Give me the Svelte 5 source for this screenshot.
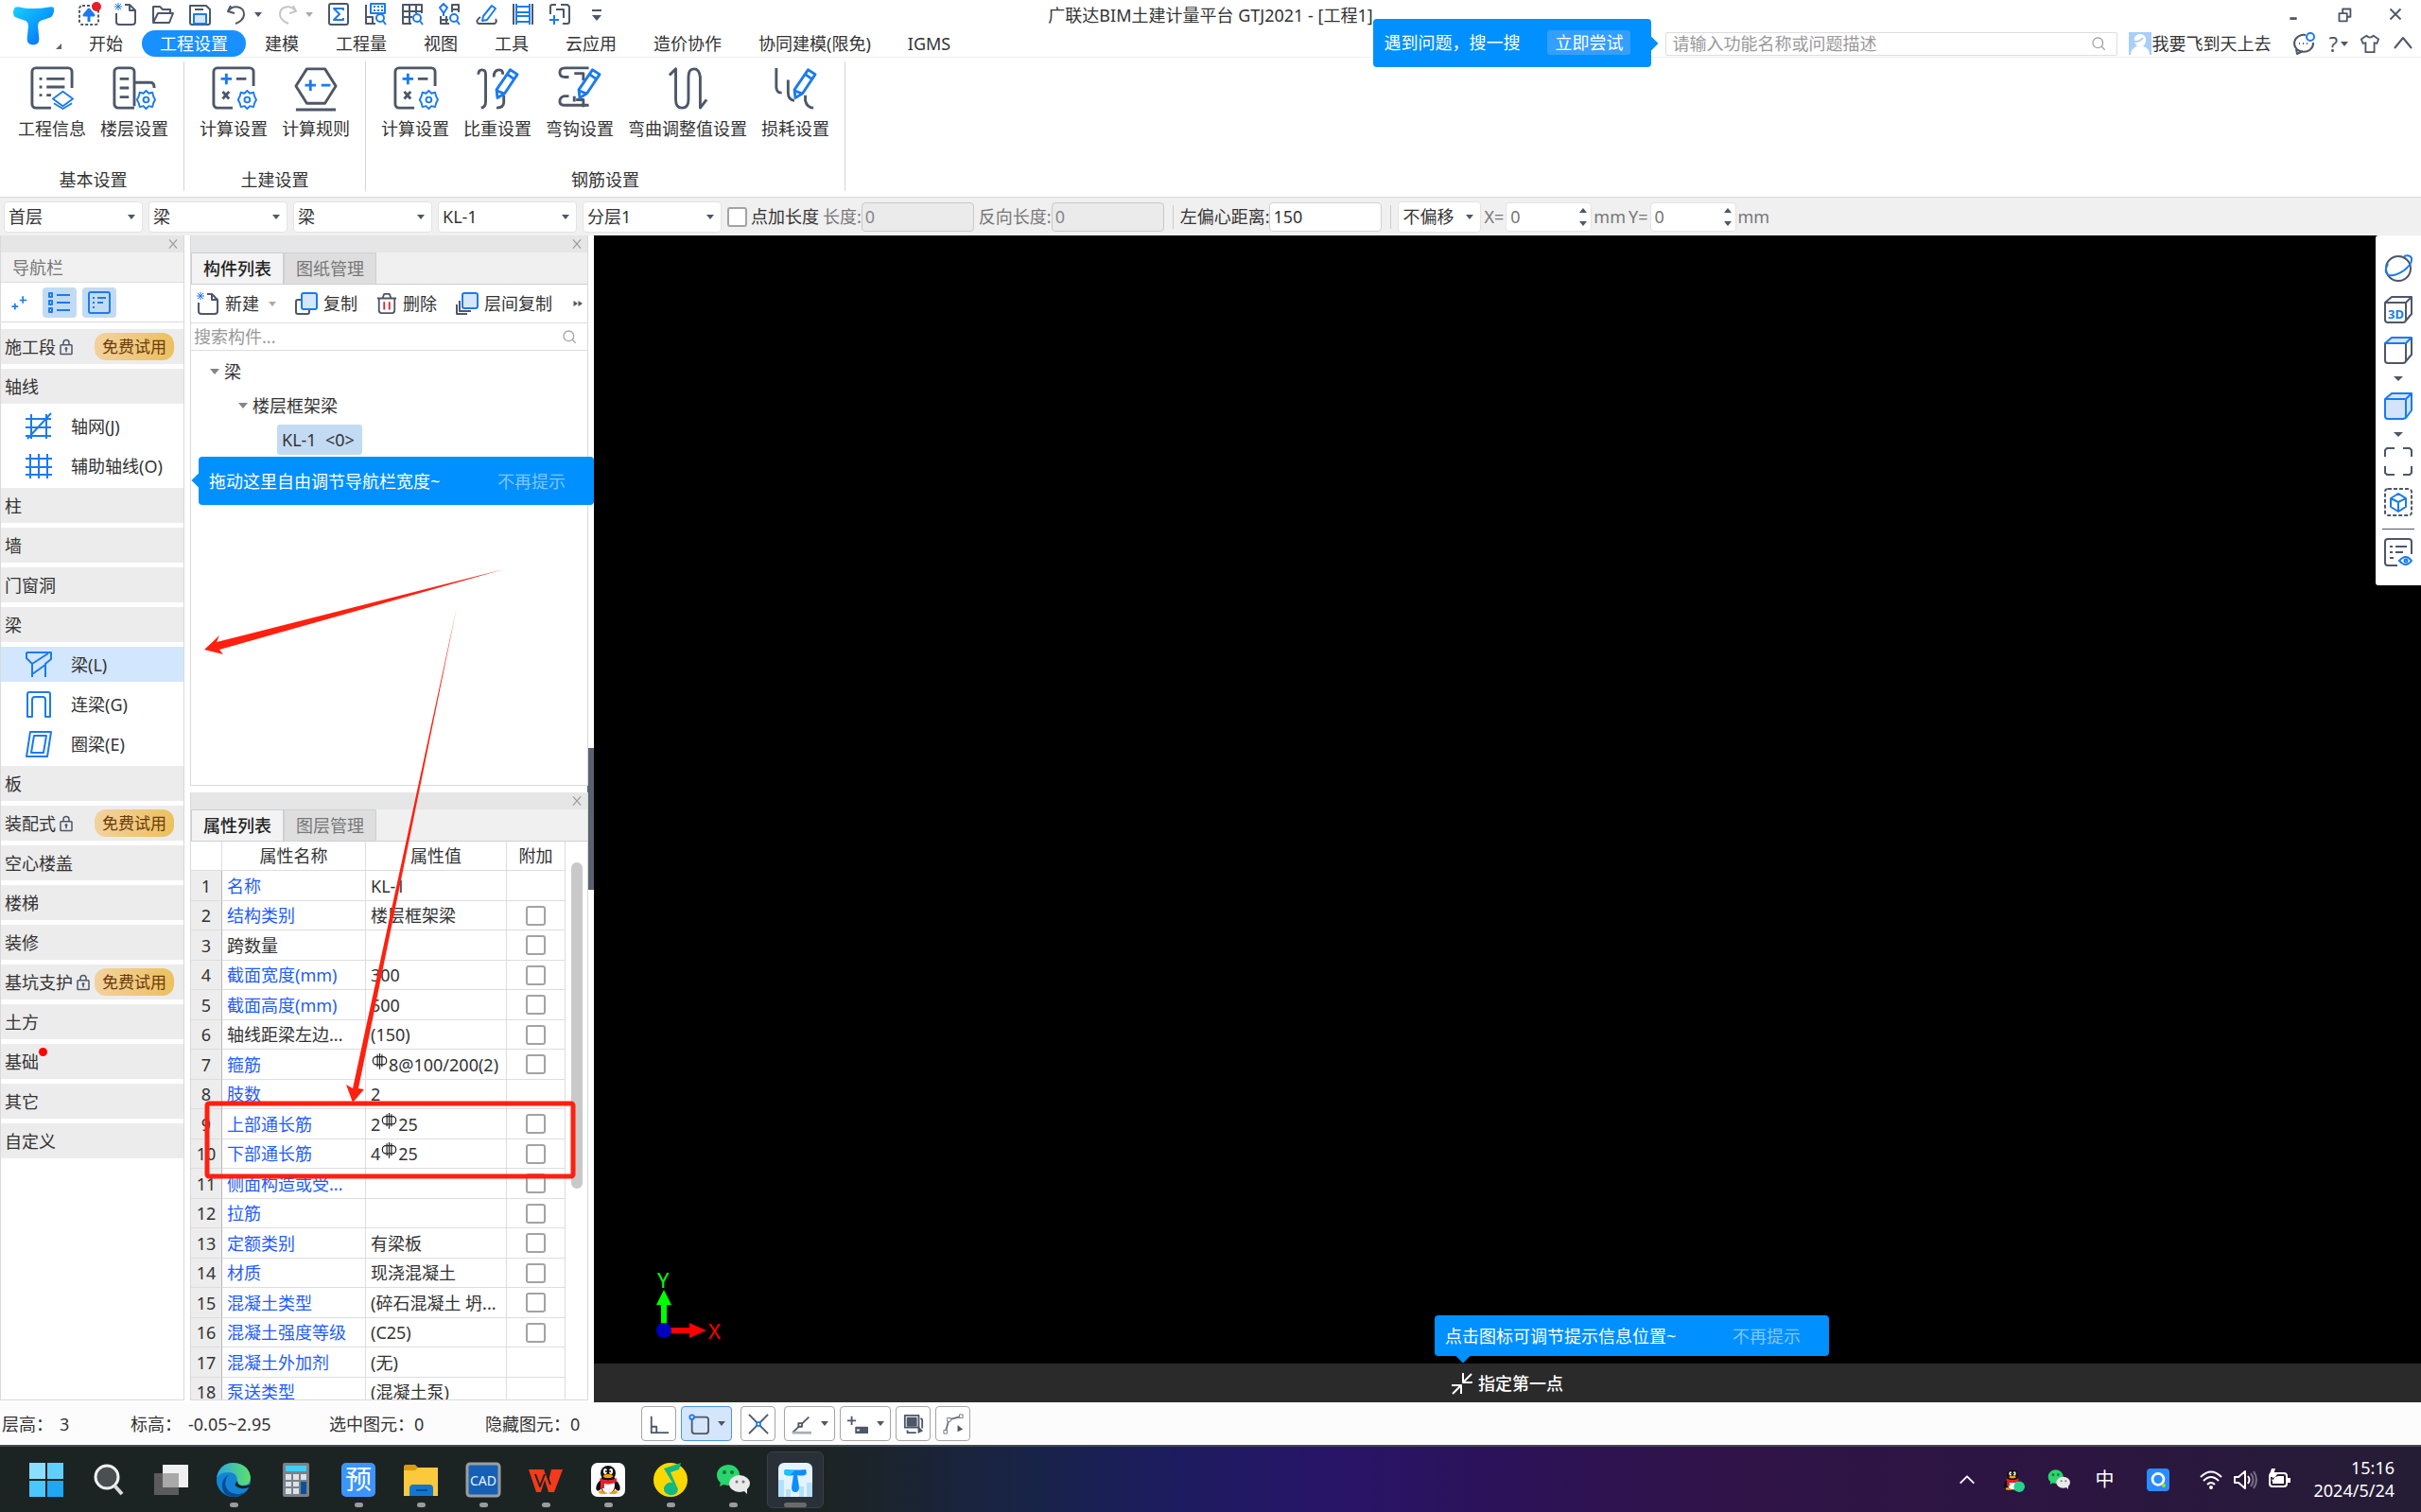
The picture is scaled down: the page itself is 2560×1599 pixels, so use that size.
<script>
  const G = '#4d5768';
  const B = '#1a7bef';
  const gear = (x, y) =>
    `<g stroke="${B}" stroke-width="2"><path d="M${x} ${y - 10}l3 3 4-1 1 4 2 4-2 4-1 4-4-1-3 3-3-3-4 1-1-4-2-4 2-4 1-4 4 1z"/><circle cx="${x}" cy="${y}" r="3"/></g>`;
  const pencil = `<g stroke="${B}"><path d="M38 4l8 5-14 21-8 5-1-9z" fill="#fff"/><path d="M35 9l7 5M23 27l8 3"/></g>`;
  const calc = `<path d="M23 46H6a4 4 0 0 1-4-4V6a4 4 0 0 1 4-4h36a4 4 0 0 1 4 4v16"/><path stroke="${B}" d="M10 14h12M16 8v12"/><path d="M27 14h11M12 28l7 8M19 28l-7 8"/>${gear(39, 37)}`;
  const mag = `<g stroke="${B}"><circle cx="17" cy="16" r="4"/><path d="M20 19l3 4"/></g>`;
  const wechat = `<ellipse cx="13" cy="13" rx="12" ry="11" fill="#2bd46c"/><path d="M5 20l-1 5 6-3z" fill="#2bd46c"/><circle cx="9" cy="10" r="2" fill="#14713a"/><circle cx="17" cy="10" r="2" fill="#14713a"/><ellipse cx="25" cy="22" rx="11" ry="9" fill="#e9e9e9"/><path d="M29 29l4 4v-6z" fill="#e9e9e9"/><circle cx="22" cy="20" r="1.500" fill="#777"/><circle cx="29" cy="20" r="1.500" fill="#777"/>`;
  const penguin = `<ellipse cx="9" cy="24" rx="3" ry="6" transform="rotate(25 9 24)" fill="#111"/><ellipse cx="27" cy="24" rx="3" ry="6" transform="rotate(-25 27 24)" fill="#111"/><ellipse cx="13" cy="31" rx="5" ry="2" fill="#f5a300"/><ellipse cx="23" cy="31" rx="5" ry="2" fill="#f5a300"/><ellipse cx="18" cy="22" rx="9" ry="10" fill="#111"/><ellipse cx="18" cy="24" rx="7" ry="8" fill="#fff"/><ellipse cx="18" cy="11" rx="8" ry="8" fill="#111"/><ellipse cx="15" cy="9" rx="2" ry="3" fill="#fff"/><ellipse cx="21" cy="9" rx="2" ry="3" fill="#fff"/><circle cx="16" cy="9" r="1" fill="#111"/><circle cx="20" cy="9" r="1" fill="#111"/><ellipse cx="18" cy="14" rx="5" ry="2" fill="#f5a300"/><path d="M9 16q9 5 18 0v4q-7 4-13 2v5h-4v-7z" fill="#e5202b"/>`;
  const tShape = `<path d="M7 7q-2 5 1 6 4 1 8 0l-2 13q0 5 4 5t4-5l-2-13q4 1 8 0 3-1 1-6-11 1-22 0z" fill="#0b8dff"/><path d="M7 7q-2 5 1 6 4 1 6-1l3-4q-5 0-10-1z" fill="#18c4fb"/>`;

  // viewBox size and drawing of every icon
  const icons = {
    logo: [36, `<defs><linearGradient id="tg" x1="0" y1="0" x2="1" y2="1"><stop offset="0" stop-color="#18d0fb"/><stop offset=".5" stop-color="#0b9dff"/><stop offset="1" stop-color="#0b62f0"/></linearGradient></defs><path stroke="none" d="M3 3Q0 8 3 11q5 2 9 3 2 1 2 5l-1 10q0 5 5 5t5-5l-1-10q0-4 2-5 4-1 9-3 3-3 2-8-2-1-5 0-5 1-12 1T8 3Q5 2 3 3z" fill="url(#tg)"/>`],
    export: [24, `<rect x="2" y="3" width="20" height="20" rx="3" stroke-dasharray="3 2"/><path d="M12 20V10M7 13l5-6 5 6z" stroke="${B}" stroke-width="3" fill="${B}"/><circle cx="20" cy="4" r="5" fill="#e5202b" stroke="none"/>`],
    new: [24, `<path d="M2 11v9a3 3 0 0 0 3 3h14a3 3 0 0 0 3-3V8l-6-6h-5"/><path d="M16 2v6h6"/><path stroke="${B}" stroke-width="1" d="M1 1l6 6M7 1L1 7M4 0v8M0 4h8"/>`],
    open: [24, `<path d="M2 20V4h7l3 3h8v4M2 21l5-10h16l-4 10z"/>`],
    save: [24, `<path d="M2 3h17l4 4v14a2 2 0 0 1-2 2H4a2 2 0 0 1-2-2z"/><path d="M7 7h9"/><rect x="6" y="12" width="13" height="10" fill="#d6e6fb" stroke="${B}"/>`],
    undo: [24, `<path d="M6 3L3 9l7 2M3 9c6-8 17-5 17 3 0 5-4 8-9 10"/>`],
    redo: [24, `<path stroke="#c4c6ca" d="M18 3l3 6-7 2M21 9C15 1 4 4 4 12c0 5 4 8 9 10"/>`],
    sigma: [24, `<rect x="2" y="1" width="20" height="22" rx="2"/><path stroke="${B}" d="M17 8V6H7l6 6-6 6h10v-2"/>`],
    mgrid: [24, `<rect x="7" y="1" width="15" height="10" stroke="${B}"/><path stroke="${B}" stroke-dasharray="2 2" d="M10 4h10M10 8h10"/><path d="M2 2v20h10M2 15h7v7"/>${mag}`],
    tgrid: [24, `<path d="M11 22H2V2h20v9M2 9h20M2 15h10M9 2v20M16 2v9"/>${mag}`],
    shapes: [24, `<path stroke="${B}" d="M6 1l4 4-4 6-4-6zM6 11v3"/><path d="M15 10V2h7v8M15 7h7M3 14v8h9M3 18h8M9 14v8"/>${mag}`],
    edit: [24, `<path stroke="${B}" d="M18 3l4 3-9 12-5 1 1-5z"/><path d="M6 15q-6 4-2 7h17q3-2 1-5"/>`],
    ladder: [24, `<path d="M2 1v22M22 1v22"/><path stroke="${B}" d="M5 1v22M19 1v22M5 4h14M5 10h14M5 14h14M5 20h14"/>`],
    addframe: [24, `<path d="M2 12V4q0-2 2-2h4M13 2h7l2 2v16q0 2-2 2h-5M8 7h8v9"/><path stroke="${B}" d="M1 18h10M6 13v10"/>`],
    more: [24, `<path d="M7 8h10"/><path d="M7 13h10l-5 6z" fill="${G}" stroke="none"/>`],
    info: [48, `<path d="M23 46H6a4 4 0 0 1-4-4V6a4 4 0 0 1 4-4h36a4 4 0 0 1 4 4v18"/><path d="M10 14h3M18 14h20M10 23h3M18 23h20M10 32h3M18 32h5"/><g stroke="${B}" stroke-width="2"><path d="M36 28l11 8-11 8-11-8z"/><path d="M26 41l10 6 10-6"/></g>`],
    floor: [48, `<path d="M24 46H6a4 4 0 0 1-4-4V6a4 4 0 0 1 4-4h14a4 4 0 0 1 4 4v38M24 18h18q4 0 4 6M8 14h10M8 24h10M8 34h10"/>${gear(37, 37)}`],
    calc: [48, calc],
    rule: [48, `<path d="M14 3h20l12 19-12 19H14L2 22zM2 48h44"/><path stroke="${B}" d="M12 21h12M18 15v12M30 21h10"/>`],
    weight: [48, `<path d="M3 9q0-5 4-5t4 5v30q0 6-5 7M20 12q0-8 6-8 4 0 4 5M31 32v8q0 6-8 6"/>${pencil}`],
    hook: [48, `<path d="M34 2H8q-6 0-6 5t6 5h4M18 8h10v8M12 33H7q-5 1-5 6 0 4 6 4h26M18 39v-6M28 45v-8h-8"/>${pencil}`],
    bend: [48, `<path d="M4 10l7-7v34q0 9 7 9t7-9V12q0-9 6-9t7 9v34l7-9"/>`],
    loss: [48, `<path d="M3 2v22q1 6 6 5M16 15v14q0 8 7 9M35 32v6q2 8 9 8"/>${pencil}`],
    search: [24, `<circle cx="11" cy="11" r="8" stroke="#a5a5a5"/><path stroke="#a5a5a5" d="M17 17l5 5"/>`],
    chat: [24, `<path d="M14 3a10 9 0 1 0 8 8M4 18l1 5 6-3"/><path d="M7 12h1M11 12h1M15 12h1"/><circle cx="19" cy="5" r="4" stroke="${B}"/>`],
    shirt: [24, `<path d="M8 3L2 7l2 5 3-1v11h10V11l3 1 2-5-6-4q-4 4-8 0z"/>`],
    up: [24, `<path d="M3 17l9-11 9 11"/>`],
    min: [24, `<path d="M8 17h8" stroke-width="3"/>`],
    restore: [24, `<rect x="6" y="11" width="9" height="9"/><path d="M10 11V6h9v9h-4"/>`],
    close: [24, `<path d="M6 6l12 12M18 6L6 18"/>`],
    closeg: [24, `<path stroke="#999" d="M5 4l14 16M19 4L5 20"/>`],
    avatar: [24, `<path stroke="none" fill="#a9cff8" d="M0 0h24v24H0z"/><path stroke="none" fill="#fff" d="M2 24q0-7 7-9-4-4-3-9 2-4 6-4t6 4q1 5-3 9 7 2 7 9z"/><path stroke="#a9cff8" d="M6 10q6 0 9-4"/>`],
    sparkle: [24, `<path stroke="${B}" d="M3 17h8M7 13v8M13 9h9M17 4v9"/>`],
    list: [24, `<g stroke="${B}"><rect x="1" y="2" width="3" height="4"/><rect x="1" y="10" width="3" height="4"/><rect x="1" y="18" width="3" height="4"/><path d="M9 4h14M9 12h14M9 20h14"/></g>`],
    note: [24, `<g stroke="${B}"><rect x="1" y="1" width="22" height="22" rx="2"/><path d="M5 7h2M10 7h9M5 12h2M10 12h6M5 17h2"/></g>`],
    lock: [24, `<rect x="4" y="9" width="16" height="13" rx="1"/><path d="M8 9V6q0-4 4-4t4 4v3M12 14v5"/><circle cx="12" cy="14" r="1"/>`],
    axis: [28, `<path stroke="${B}" d="M6 1v26M22 1v26M0 6h27M0 15h27M0 24h27M2 27L27 0"/>`],
    grid: [28, `<path stroke="${B}" d="M5 1v26M14 1v26M23 1v26M0 6h28M0 15h28M0 23h28"/>`],
    beam: [28, `<path stroke="${B}" d="M1 1h26v7l-6 5v14M1 1v6l6 6v14M7 13L24 2M7 24l14-10"/>`],
    link: [28, `<path stroke="${B}" d="M2 27V3q0-2 2-2h20q2 0 2 2v24h-5V9q0-3-3-3h-8q-3 0-3 3v18z"/>`],
    ring: [28, `<path stroke="${B}" d="M5 1h22l-4 26H1zM9 5h13l-3 18H6z"/>`],
    copy: [24, `<path d="M6 8H3a2 2 0 0 0-2 2v11a2 2 0 0 0 2 2h10a2 2 0 0 0 2-2v-2"/><rect x="7" y="1" width="16" height="17" rx="2" fill="#d6e6fb" stroke="${B}"/>`],
    trash: [24, `<path d="M1 6h22M7 6l2-5h6l2 5M3 6v14q0 3 3 3h12q3 0 3-3V6"/><path stroke="#e5202b" d="M9 10v9M15 10v9"/>`],
    layers: [24, `<path d="M4 9v11h12M1 13v10h11"/><rect x="7" y="1" width="16" height="16" rx="2" fill="#d6e6fb" stroke="${B}"/>`],
    dbl: [24, `<path d="M3 6l9 6-9 6zM13 6l9 6-9 6z" fill="${G}" stroke="none"/>`],
    orbit: [30, `<circle cx="15" cy="15" r="13"/><path stroke="${B}" d="M4 10q-5 9 1 12 7 1 16-5 9-7 8-13-2-4-8-2"/>`],
    cube3d: [30, `<path d="M1 8h22v18q0 3-3 3H4q-3 0-3-3zM1 8l7-6h21v18l-6 7M23 8l6-6"/><text x="4" y="25" font-size="13" font-weight="700" fill="${B}" stroke="none">3D</text>`],
    cubetop: [30, `<path d="M1 8h22v18q0 3-3 3H4q-3 0-3-3zM29 2v18l-6 7"/><path stroke="${B}" fill="#d2e3fa" d="M1 8l7-6h21l-6 6z"/>`],
    cubefill: [30, `<path stroke="${B}" fill="#d2e3fa" d="M1 8l7-6h21v18l-6 8-3 1H4q-3 0-3-3zM1 8h22v20M23 8l6-6"/>`],
    corners: [30, `<path d="M1 10V3l2-2h8M20 1h7l2 2v7M29 20v7l-2 2h-7M11 29H3l-2-2v-7"/>`],
    isolate: [30, `<rect x="1" y="1" width="28" height="28" rx="3" stroke-dasharray="4 2"/><path stroke="${B}" d="M15 6l8 5v9l-8 5-8-5v-9zM7 11l8 4 8-4M15 15v10"/>`],
    viewlist: [30, `<path d="M14 29H4q-3 0-3-3V4q0-3 3-3h22q3 0 3 3v13M6 9h3M12 9h12M6 15h3M12 15h8M6 21h4"/><path stroke="${B}" d="M16 24q7-8 13 0-6 8-13 0z"/><circle cx="23" cy="24" r="1.500" stroke="${B}"/>`],
    ortho: [24, `<path d="M3 3v19h20M3 15h6v7"/>`],
    snap: [24, `<rect x="4" y="4" width="19" height="19" rx="3"/><circle cx="4" cy="4" r="2.500" stroke="${B}" fill="#d5e5fb"/>`],
    cross: [24, `<path d="M1 1l22 22M23 1L1 23"/><rect x="10" y="10" width="4" height="4" stroke="${B}" fill="#fff"/>`],
    angle: [24, `<path d="M1 22L20 4"/><path stroke="#a9adb5" stroke-width="3" d="M1 22h22"/><rect x="8" y="11" width="4" height="4" fill="#fff"/>`],
    plusbar: [24, `<path d="M0 8h10M5 3v10"/><rect x="10" y="16" width="13" height="6" fill="${G}"/><path stroke="#fff" d="M11 19h3"/>`],
    pick: [24, `<rect x="2" y="2" width="16" height="14"/><path d="M5 5h10v9H5z" fill="${G}"/><path d="M5 19v3h10M22 6v11M20 6h2"/><path d="M17 14v9l6-3z" fill="${G}" stroke="none"/>`],
    poly: [24, `<path d="M3 21L7 7l15-4" stroke="#6c7482"/><g fill="#fff" stroke="#6c7482" stroke-width="1"><rect x="1" y="19" width="4" height="4"/><rect x="5" y="5" width="4" height="4"/><rect x="19" y="1" width="4" height="4"/></g><path d="M17 13v8l6-3z" fill="${G}" stroke="none"/>`],
    inward: [24, `<path stroke="#fff" d="M22 2L13 11M13 1v10h10M2 23l9-9M1 14h10v9"/>`],
    rebar: [16, `<rect x="2" y="3" width="12" height="7" rx="3" stroke-width="1" stroke="#222"/><path stroke="#222" stroke-width="1" d="M8 0v14M6 1v11M10 1v11"/>`],
    windows: [36, `<g stroke="none"><path d="M0 0h17v17H0z" fill="#8adfff"/><path d="M19 0h17v17H19z" fill="#5fd0fd"/><path d="M0 19h17v17H0z" fill="#4cc6fb"/><path d="M19 19h17v17H19z" fill="#1ea7f2"/></g>`],
    find: [36, `<circle cx="16" cy="15" r="12" stroke="#f2f2f2" stroke-width="3" fill="#4a5052"/><path stroke="#dcdcdc" stroke-width="4" d="M24 24l8 9"/>`],
    task: [36, `<g stroke="none"><path d="M0 11h26v23H0z" fill="#5b5b5b"/><path d="M9 2h27v24H9z" fill="#f0f0f0"/><path d="M9 11h17v15H9z" fill="#a9a9a9"/></g>`],
    edge: [36, `<defs><linearGradient id="eg" x1="0" x2="1"><stop offset="0" stop-color="#2aa7e0"/><stop offset="1" stop-color="#5fe06a"/></linearGradient></defs><g stroke="none"><circle cx="18" cy="18" r="18" fill="#1384d4"/><path d="M0 16Q3 0 18 0q16 1 18 15 0 9-9 9-7-1-5-5 0-9-10-9-8 0-12 6z" fill="url(#eg)"/><path d="M12 13q-6 10 1 17 9 7 20-1-7 8-18 7Q5 33 6 22q1-6 6-9z" fill="#0b4a94"/><path d="M22 19q-4 4-1 6 5 4 13 1 2-1 1-3-5 2-9 1-4-1-4-5z" fill="#1c2423"/></g>`],
    calculator: [36, `<g stroke="none"><rect x="4" y="0" width="28" height="36" rx="2" fill="#788289"/><path d="M7 3h22v6H7z" fill="#3fd0f8"/><path d="M7 12h6v6H7zM15 12h6v6h-6zM23 12h6v6h-6zM7 20h6v5H7zM15 20h6v5h-6zM7 27h6v6H7zM15 27h6v6h-6z" fill="#dde2e8"/><path d="M23 20h6v13h-6z" fill="#0f4f99"/></g>`],
    budget: [36, `<rect width="36" height="36" rx="5" fill="#3b95fb" stroke="none"/><text x="4" y="28" font-size="28" fill="#fff" stroke="none">预</text>`],
    folder: [36, `<g stroke="none"><path d="M0 4q0-2 2-2h10l4 4v6H0z" fill="#d99a13"/><path d="M0 8h12l3-3h21v30H0z" fill="#fcc93c"/><path d="M6 35V27q0-4 4-4h17q4 0 4 4v8z" fill="#1277cf"/></g><path d="M13 29h12" stroke="#0a4d95"/>`],
    cad: [36, `<rect x="1" y="1" width="34" height="34" rx="3" fill="#1560b4" stroke="#9a9da1" stroke-width="3"/><text x="4" y="24" font-size="14" fill="#e8f1fb" stroke="none">CAD</text>`],
    wps: [36, `<path d="M0 7h17l4 12 3-12h12L27 31h-6l-4-13-4 13H8z" fill="#f43a1c" stroke="none"/><path d="M7 12l5 13 5-13M17 7l6 16" stroke="#1c2423" stroke-width="2"/>`],
    qq: [36, `<g stroke="none"><rect width="36" height="36" rx="7" fill="#fff"/>${penguin}</g>`],
    music: [36, `<g stroke="none"><circle cx="18" cy="18" r="18" fill="#fcd803"/><path d="M11 6L29 0l-2 7-9 3 8 18q-1 7-9 6-7-2-6-8 3-6 9-5z" fill="#12b886"/></g>`],
    wechat: [36, `<g stroke="none">${wechat}</g>`],
    tapp: [36, `<g stroke="none"><rect width="36" height="36" rx="6" fill="#e3f4ff"/><path d="M0 18h6v18H0zM8 28h5v8H8zM22 25h5v11h-5zM30 21h6v15h-6z" fill="#b5e0fb"/>${tShape}</g>`],
    qqtray: [36, `<g stroke="none">${penguin}<circle cx="28" cy="28" r="8" fill="#25d38c"/></g>`],
    qbrowser: [36, `<g stroke="none"><rect width="36" height="36" rx="6" fill="#2b8cff"/></g><circle cx="18" cy="17" r="9" stroke="#fff" stroke-width="4"/><circle cx="27" cy="27" r="3" fill="#9be215" stroke="none"/>`],
    chev: [24, `<path stroke="#fff" d="M4 16l8-8 8 8"/>`],
    wifi: [24, `<g stroke="#fff"><path d="M1 9q11-11 22 0M4 13q8-8 16 0M8 17q4-4 8 0"/><circle cx="12" cy="20" r="1"/></g>`],
    volume: [24, `<path stroke="#fff" d="M1 9h4l7-6v18l-7-6H1zM15 8q3 4 0 8"/><path stroke="#77708a" d="M18 5q5 7 0 14M21 3q6 9 0 18"/>`],
    battery: [24, `<rect x="2" y="5" width="18" height="14" rx="3" stroke="#fff"/><path d="M5 10l6-2h6v8H5zM21 10h3v5h-3zM4 0L1 9h4l-1 5 6-8H6l2-6z" fill="#fff" stroke="none"/>`]
  };

  const quick = ['export', 'new', 'open', 'save', 'undo', 'redo', 'sigma', 'mgrid', 'tgrid', 'shapes', 'edit', 'ladder', 'addframe', 'more'];
  const tabs = ['开始', '工程设置', '建模', '工程量', '视图', '工具', '云应用', '造价协作', '协同建模(限免)', 'IGMS'];
  const groups = [
    ['基本设置', [['info', '工程信息'], ['floor', '楼层设置']]],
    ['土建设置', [['calc', '计算设置'], ['rule', '计算规则']]],
    ['钢筋设置', [['calc', '计算设置'], ['weight', '比重设置'], ['hook', '弯钩设置'], ['bend', '弯曲调整值设置'], ['loss', '损耗设置']]]
  ];
  const picks = [['楼层', '首层'], ['构件大类', '梁'], ['构件类型', '梁'], ['构件', 'KL-1'], ['分层', '分层1']];
  const nav = [
    { t: '施工段', trial: true }, { t: '轴线' }, { t: '轴网(J)', i: 'axis' }, { t: '辅助轴线(O)', i: 'grid' },
    { t: '柱' }, { t: '墙' }, { t: '门窗洞' }, { t: '梁' },
    { t: '梁(L)', i: 'beam', on: true }, { t: '连梁(G)', i: 'link' }, { t: '圈梁(E)', i: 'ring' },
    { t: '板' }, { t: '装配式', trial: true }, { t: '空心楼盖' }, { t: '楼梯' }, { t: '装修' },
    { t: '基坑支护', trial: true }, { t: '土方' }, { t: '基础', dot: true }, { t: '其它' }, { t: '自定义' }
  ];
  // name, value, is a key property, has a tick box
  const props = [
    ['名称', 'KL-1', 1, 0], ['结构类别', '楼层框架梁', 1, 1], ['跨数量', '', 0, 1],
    ['截面宽度(mm)', '300', 1, 1], ['截面高度(mm)', '500', 1, 1], ['轴线距梁左边...', '(150)', 0, 1],
    ['箍筋', '#8@100/200(2)', 1, 1], ['肢数', '2', 1, 0], ['上部通长筋', '2#25', 1, 1],
    ['下部通长筋', '4#25', 1, 1], ['侧面构造或受...', '', 1, 1], ['拉筋', '', 1, 1],
    ['定额类别', '有梁板', 1, 1], ['材质', '现浇混凝土', 1, 1], ['混凝土类型', '(碎石混凝土 坍...', 1, 1],
    ['混凝土强度等级', '(C25)', 1, 1], ['混凝土外加剂', '(无)', 1, 0], ['泵送类型', '(混凝土泵)', 1, 0]
  ];
  const views = ['orbit', 'cube3d', 'cubetop', '', 'cubefill', '', 'corners', 'isolate', '-', 'viewlist'];
  const status = [['ortho', 0, ''], ['snap', 1, 'on'], ['cross', 0, 'gap'], ['angle', 1, 'gap'], ['plusbar', 1, ''], ['pick', 0, ''], ['poly', 0, '']];
  const apps = [
    ['windows', '开始菜单', ''], ['find', '搜索', ''], ['task', '任务视图', ''], ['edge', 'Edge', 'run'], ['calculator', '计算器', ''],
    ['budget', '预算', 'run'], ['folder', '资源管理器', 'run'], ['cad', 'CAD', 'run'], ['wps', 'WPS', 'run'], ['qq', 'QQ', 'run'],
    ['music', 'QQ音乐', 'run'], ['wechat', '微信', 'run'], ['tapp', '土建计量', 'active']
  ];
</script>

{#snippet icon(name, size)}
  <svg class="ico" viewBox="0 0 {icons[name][0]} {icons[name][0]}" width={size} height={size} fill="none" stroke={G} stroke-width={icons[name][0] === 48 ? 3 : 2} stroke-linejoin="round" aria-hidden="true">{@html icons[name][1]}</svg>
{/snippet}

{#snippet caption()}
  <div class="caption"><button aria-label="关闭面板">{@render icon('closeg', 14)}</button></div>
{/snippet}

{#snippet spin(label, value)}
  <label class="spin">{label}<span class="spinbox"><input value={value} /><span class="arrows"><i class="caret flip"></i><i class="caret"></i></span></span>mm</label>
{/snippet}

<div class="app">
  <header>
    <button class="logo" aria-label="主菜单">{@render icon('logo', 46)}<i class="corner"></i></button>
    <div class="quick">
      {#each quick as q}
        <button aria-label={q}>{@render icon(q, 24)}{#if q === 'undo' || q === 'redo'}<i class="caret" class:faint={q === 'redo'}></i>{/if}</button>
      {/each}
    </div>
    <h1>广联达BIM土建计量平台 GTJ2021 - [工程1]</h1>
    <div class="win">
      <button aria-label="最小化">{@render icon('min', 22)}</button>
      <button aria-label="还原">{@render icon('restore', 22)}</button>
      <button aria-label="关闭">{@render icon('close', 22)}</button>
    </div>
    <div class="menu">
      <nav class="tabs">
        {#each tabs as t}<button class:on={t === '工程设置'}>{t}</button>{/each}
      </nav>
      <div class="tools">
        <div class="find">
          <input aria-label="搜索功能" placeholder="请输入功能名称或问题描述" />
          {@render icon('search', 16)}
          <div class="tip tip-find">遇到问题，搜一搜<button>立即尝试</button></div>
        </div>
        <button class="user">{@render icon('avatar', 24)}我要飞到天上去</button>
        <button class="chat" aria-label="消息">{@render icon('chat', 24)}</button>
        <button class="help">?<i class="caret"></i></button>
        <button aria-label="皮肤">{@render icon('shirt', 22)}</button>
        <button aria-label="收起">{@render icon('up', 24)}</button>
      </div>
    </div>
  </header>

  <section class="ribbon">
    {#each groups as [name, items]}
      <div class="group">
        <div class="cmds">
          {#each items as [i, label]}<button>{@render icon(i, 46)}<span>{label}</span></button>{/each}
        </div>
        <span class="gname">{name}</span>
      </div>
    {/each}
  </section>

  <section class="options">
    {#each picks as [label, v]}
      <span class="pick"><select aria-label={label}><option>{v}</option></select><i class="caret"></i></span>
    {/each}
    <label class="check"><input type="checkbox" />点加长度</label>
    <label class="len">长度:<input value="0" disabled /></label>
    <label class="len">反向长度:<input value="0" disabled /></label>
    <span class="bar"></span>
    <label class="len strong">左偏心距离:<input value="150" /></label>
    <span class="bar"></span>
    <span class="pick small"><select aria-label="偏移方式"><option>不偏移</option></select><i class="caret"></i></span>
    {@render spin('X=', '0')}
    {@render spin('Y=', '0')}
  </section>

  <main>
    <aside class="navpane">
      {@render caption()}
      <h2>导航栏</h2>
      <div class="navtools">
        <button aria-label="新功能">{@render icon('sparkle', 20)}</button>
        <button class="on" aria-label="列表">{@render icon('list', 24)}</button>
        <button class="on" aria-label="图标">{@render icon('note', 24)}</button>
      </div>
      <div class="navlist">
        {#each nav as n}
          <button class={n.i ? 'leaf' : 'cat'} class:on={n.on}>
            {#if n.i}{@render icon(n.i, 28)}{/if}
            <span class="nm">{n.t}{#if n.dot}<i class="dot"></i>{/if}</span>
            {#if n.trial}{@render icon('lock', 18)}<span class="trial">免费试用</span>{/if}
          </button>
        {/each}
      </div>
    </aside>

    <div class="panes">
      <section class="pane">
        {@render caption()}
        <div class="ptabs"><button class="on">构件列表</button><button>图纸管理</button></div>
        <div class="ptools">
          <button>{@render icon('new', 24)}新建<i class="caret faint"></i></button>
          <button>{@render icon('copy', 24)}复制</button>
          <button>{@render icon('trash', 22)}删除</button>
          <button>{@render icon('layers', 24)}层间复制</button>
          <button class="moreb" aria-label="更多">{@render icon('dbl', 12)}</button>
        </div>
        <div class="psearch"><input aria-label="搜索构件" placeholder="搜索构件..." />{@render icon('search', 16)}</div>
        <ul class="tree">
          <li><i class="caret gray"></i>梁</li>
          <li class="l2"><i class="caret gray"></i>楼层框架梁</li>
          <li class="l3"><span>KL-1 &nbsp;&lt;0&gt;</span></li>
        </ul>
        <div class="tip tip-nav">拖动这里自由调节导航栏宽度~<button class="dim">不再提示</button></div>
      </section>

      <section class="pane">
        {@render caption()}
        <div class="ptabs"><button class="on">属性列表</button><button>图层管理</button></div>
        <div class="tablebox">
          <table>
            <colgroup><col class="c1" /><col class="c2" /><col class="c3" /><col class="c4" /></colgroup>
            <thead><tr><th></th><th>属性名称</th><th>属性值</th><th>附加</th></tr></thead>
            <tbody>
              {#each props as [name, value, key, box], n}
                <tr>
                  <td class="idx">{n + 1}</td>
                  <td class:key>{name}</td>
                  <td>{#each value.split('#') as part, k}{#if k}{@render icon('rebar', 19)}{/if}{part}{/each}</td>
                  <td class="tick">{#if box}<input type="checkbox" aria-label="附加 {name}" />{/if}</td>
                </tr>
              {/each}
            </tbody>
          </table>
          <div class="scroll"><i></i></div>
        </div>
      </section>
    </div>

    <div class="splitter"><i></i></div>

    <section class="canvas">
      <svg class="axes" width="90" height="90" viewBox="0 0 90 90" aria-hidden="true">
        <path d="M22 64V32" stroke="#0f0" stroke-width="6" /><path d="M14 37l8-16 8 16z" fill="#0f0" />
        <path d="M24 64h30" stroke="#f00" stroke-width="6" /><path d="M49 56l18 8-18 8z" fill="#f00" />
        <circle cx="22" cy="64" r="8" fill="#0000c0" />
        <text x="15" y="19" fill="#0f0">Y</text><text x="69" y="73" fill="#f00">X</text>
      </svg>
      <div class="views">
        {#each views as v}
          {#if v === '-'}<hr />{:else if v}<button aria-label={v}>{@render icon(v, 30)}</button>{:else}<i class="caret"></i>{/if}
        {/each}
      </div>
      <div class="prompt">
        <button aria-label="切换位置">{@render icon('inward', 24)}</button>指定第一点
        <div class="tip tip-prompt">点击图标可调节提示信息位置~<button class="dim">不再提示</button></div>
      </div>
    </section>
  </main>

  <footer class="status">
    <span class="s1">层高：</span><span class="s2">3</span><span class="s3">标高：</span><span class="s4">-0.05~2.95</span><span class="s5">选中图元：0</span><span class="s6">隐藏图元：0</span>
    <div class="sbtns">
      {#each status as [i, drop, c]}
        <button class={c} class:wide={drop} aria-label={i}>{@render icon(i, 22)}{#if drop}<i class="caret"></i>{/if}</button>
      {/each}
    </div>
  </footer>

  <footer class="taskbar">
    <div class="apps">
      {#each apps as [i, label, c]}<button class={c} aria-label={label}>{@render icon(i, 36)}</button>{/each}
    </div>
    <div class="tray">
      <button aria-label="显示隐藏的图标">{@render icon('chev', 22)}</button>
      <button aria-label="QQ">{@render icon('qqtray', 26)}</button>
      <button aria-label="微信">{@render icon('wechat', 24)}</button>
      <button class="ime">中</button>
      <button aria-label="浏览器">{@render icon('qbrowser', 24)}</button>
      <button class="net" aria-label="网络、音量和电源">{@render icon('wifi', 24)}{@render icon('volume', 24)}{@render icon('battery', 24)}</button>
      <div class="clock"><span>15:16</span><span>2024/5/24</span></div>
    </div>
  </footer>

  <svg class="marks" aria-hidden="true">
    <path d="M533 602L229 679l3-7-16 15 20 5-4-5z" fill="#ff2010" />
    <path d="M483 642L373 1151l-7-4 7 19 12-14-6-1z" fill="#ff2010" />
    <rect x="219" y="1167" width="387" height="77" rx="2" fill="none" stroke="#ff2010" stroke-width="5" />
  </svg>
</div>

<style>
  :global(body) { margin: 0; }
  .app {
    position: relative;
    display: flex;
    flex-direction: column;
    height: 100vh;
    overflow: hidden;
    background: #fff;
    color: #333;
    font: 18px/24px "Noto Sans", "Noto Sans CJK SC", sans-serif;
    white-space: nowrap;
  }
  .app :global(*) { box-sizing: border-box; }
  button, input, select { font: inherit; color: inherit; margin: 0; padding: 0; border: 0; background: none; }
  button { display: flex; align-items: center; }
  .ico { flex: none; display: block; overflow: visible; }
  .caret { flex: none; width: 0; height: 0; border: 4px solid transparent; border-top: 5px solid #4d5768; border-bottom: 0; }
  .caret.flip { transform: rotate(180deg); }
  .caret.faint { border-top-color: #aaa; }
  .caret.gray { border-top-color: #858585; border-left-width: 5px; border-right-width: 5px; border-top-width: 6px; }

  header {
    display: grid;
    grid-template: 30px 30px / 75px minmax(0, 1fr) auto minmax(0, 1fr) 75px;
    border-bottom: 1px solid #eee;
  }
  .logo { grid-row: 1 / 3; position: relative; padding: 4px 0 0 12px; align-items: flex-start; }
  .corner { position: absolute; right: 10px; bottom: 8px; border: 3px solid #666; border-top-color: transparent; border-left-color: transparent; }
  .quick { display: flex; align-items: center; gap: 15px; padding-left: 7px; }
  .quick button { gap: 7px; }
  h1 { margin: 0; font: inherit; line-height: 32px; }
  .win { grid-column: 4 / 6; display: flex; justify-content: flex-end; align-items: center; gap: 32px; padding-right: 16px; }
  .menu { grid-column: 2 / 6; display: flex; justify-content: space-between; align-items: center; padding-top: 2px; }
  .tabs { display: flex; gap: 1px; }
  .tabs button { height: 28px; padding: 0 19px; border-radius: 14px; }
  .tabs .on { background: #1890ff; color: #fff; }
  .tools { display: flex; align-items: center; gap: 12px; padding-right: 7px; }
  .find { position: relative; display: flex; align-items: center; width: 478px; height: 25px; padding: 0 11px 0 6px; border: 1px solid #ddd; border-radius: 2px; }
  .find input, .psearch input { flex: 1; min-width: 0; outline: 0; }
  input::placeholder { color: #999; opacity: 1; }
  .chat { margin-left: 11px; }
  .help { font-size: 22px; gap: 3px; margin-left: 2px; color: #4d5768; }

  .tip { position: absolute; z-index: 3; display: flex; align-items: center; justify-content: space-between; background: #0090ff; color: #fff; border-radius: 4px; }
  .tip::before { content: ""; position: absolute; width: 12px; height: 12px; background: #0090ff; transform: rotate(45deg); }
  .tip-find { right: calc(100% + 16px); top: -15px; width: 294px; height: 51px; padding: 0 22px 0 11px; }
  .tip-find::before { right: -5px; top: 20px; }
  .tip-find button { height: 26px; padding: 0 8px; background: #339fff; border-radius: 3px; }
  .dim { color: #80c7ff; }

  .ribbon { display: flex; height: 147px; padding-left: 3px; }
  .group { display: flex; flex-direction: column; justify-content: space-between; align-items: center; margin: 4px 0 6px; padding: 5px 16px 0; border-right: 1px solid #d5d5d5; }
  .cmds { display: flex; gap: 15px; }
  .cmds button { flex-direction: column; gap: 8px; }

  .options { display: flex; align-items: center; height: 41px; padding-left: 4px; background: #f0f0f0; border-top: 1px solid #d8d8d8; color: #777; }
  .pick { position: relative; display: flex; align-items: center; width: 147px; height: 33px; margin-right: 6px; background: #fff; border: 1px solid #e3e3e3; border-radius: 4px; color: #333; }
  .pick select { appearance: none; width: 100%; height: 100%; padding-left: 4px; outline: 0; }
  .pick .caret { position: absolute; right: 7px; }
  .pick.small { width: 88px; margin-right: 3px; }
  .check { display: flex; align-items: center; gap: 4px; margin-right: 4px; color: #333; }
  input[type="checkbox"] { appearance: none; display: block; width: 21px; height: 21px; background: #fff; border: 2px solid #a3a3a3; border-radius: 3px; }
  .len { display: flex; align-items: center; margin-right: 5px; }
  .len input { width: 119px; height: 31px; padding-left: 3px; border: 1px solid #d2d2d2; border-radius: 4px; background: #fff; }
  .len input:disabled { background: #ebebeb; color: #888; border-color: #c8c8c8; }
  .strong { color: #333; }
  .bar { width: 1px; height: 25px; margin: 0 7px 0 4px; background: #ccc; }
  .spin { display: flex; align-items: center; gap: 2px; margin-right: 3px; }
  .spinbox { display: flex; align-items: center; width: 91px; height: 31px; padding: 0 4px; background: #fff; border: 1px solid #e3e3e3; border-radius: 4px; }
  .spinbox input { flex: 1; min-width: 0; }
  .arrows { display: grid; gap: 9px; }

  main { flex: 1; min-height: 0; display: flex; }
  .navpane { width: 195px; margin-bottom: 2px; border: 1px solid #d9d9d9; border-top: 0; }
  .caption { display: flex; justify-content: flex-end; align-items: center; height: 18px; padding-right: 4px; background: #e6e6e6; }
  h2 { margin: 0; height: 32px; padding-left: 12px; font: inherit; line-height: 32px; background: #f1f1f1; color: #777; border-bottom: 1px solid #ddd; }
  .navtools { display: flex; align-items: center; gap: 6px; height: 42px; padding-left: 9px; border-bottom: 1px solid #d9d9d9; }
  .navtools button { justify-content: center; width: 36px; height: 32px; border-radius: 4px; }
  .navtools button:first-child { width: 29px; justify-content: flex-start; }
  .navtools .on { background: #c3daf3; }
  .navlist { display: grid; gap: 5px; padding-top: 7px; }
  .navlist button { height: 37px; padding: 0 10px 0 4px; }
  .cat { background: #ececec; }
  .navlist .leaf { gap: 20px; padding-left: 26px; }
  .navlist .on { background: #d2e6fd; }
  .nm { position: relative; }
  .cat .ico { margin-left: 2px; }
  .trial { margin-left: auto; padding: 0 8px; font-size: 17px; line-height: 29px; border-radius: 12px; background: linear-gradient(100deg, #f3d2a0, #ecc05c); color: #6b3a0c; }
  .dot { position: absolute; right: -9px; top: -3px; width: 9px; height: 9px; border-radius: 50%; background: #f00; }

  .panes { display: grid; grid-template-rows: 582fr 643fr; gap: 7px; width: 420px; margin: 0 0 2px 6px; }
  .pane { position: relative; display: flex; flex-direction: column; min-height: 0; border: 1px solid #d9d9d9; border-top: 0; }
  .ptabs { display: flex; height: 34px; background: #f0f0f0; border-bottom: 1px solid #ccd0d4; }
  .ptabs button { width: 98px; justify-content: center; background: #dedede; border: 1px solid #ccd0d4; border-bottom: 0; color: #777; }
  .ptabs .on { background: #f3f3f3; color: #222; font-weight: 500; }
  .ptools { display: flex; align-items: center; height: 41px; gap: 20px; padding: 0 3px 0 6px; border-bottom: 1px solid #ddd; }
  .ptools button { gap: 6px; }
  .ptools .caret { margin-left: 4px; }
  .ptools .moreb { margin-left: auto; width: 14px; height: 30px; justify-content: center; }
  .psearch { display: flex; align-items: center; height: 29px; padding: 0 11px 0 3px; border-bottom: 1px solid #ddd; }
  .tree { margin: 0; padding: 4px 0 0 20px; list-style: none; }
  .tree li { display: flex; align-items: center; gap: 5px; height: 36px; }
  .tree .l2 { padding-left: 30px; }
  .tree .l3 { padding-left: 71px; }
  .l3 span { padding: 4px 8px 4px 5px; background: #c3daf3; border-radius: 3px; }
  .tip-nav { left: 8px; top: 234px; width: 418px; height: 51px; padding: 0 30px 0 11px; }
  .tip-nav::before { left: -5px; top: 19px; }

  .tablebox { flex: 1; min-height: 0; display: flex; overflow: hidden; }
  table { table-layout: fixed; width: 396px; height: max-content; border-collapse: separate; border-spacing: 0; }
  .c1 { width: 33px; }
  .c2 { width: 152px; }
  .c3 { width: 149px; }
  .c4 { width: 62px; }
  th, td { height: 31px; padding: 0 0 0 5px; border: 1px solid #ddd; border-width: 0 1px 1px 0; text-align: left; font-weight: 400; overflow: hidden; }
  tbody tr:nth-child(odd) td { height: 32px; }
  th { padding: 0; text-align: center; }
  td.idx { padding: 0; text-align: center; background: #ededed; border-right-color: #b5b5b5; }
  .key { color: #1f5cff; }
  td .ico { display: inline-block; vertical-align: 0; }
  td.tick { padding: 0; }
  .tick input { margin: 0 auto; }
  .scroll { flex: 1; padding: 22px 5px 0 6px; }
  .scroll i { display: block; height: 345px; border-radius: 6px; background: #c9c9c9; }

  .splitter { display: flex; flex-direction: column; justify-content: center; width: 7px; }
  .splitter i { height: 150px; background: #5a6270; }

  .canvas { flex: 1; position: relative; display: flex; flex-direction: column; justify-content: flex-end; align-items: flex-end; background: #000; }
  .axes { position: absolute; left: 52px; bottom: 50px; font-size: 22px; }
  .views { display: flex; flex-direction: column; align-items: center; gap: 13px; width: 48px; margin-bottom: auto; padding: 20px 0 20px; background: #fff; border-radius: 3px 0 0 3px; }
  .views .caret { border-width: 5px 5px 0; margin-bottom: -2px; }
  .views hr { width: 34px; height: 1px; margin: 0 0 -4px; border: 0; background: #4d5768; }
  .prompt { position: relative; align-self: stretch; display: flex; align-items: center; gap: 5px; height: 41px; padding-left: 906px; background: #2a2a2a; color: #fff; font-weight: 500; }
  .tip-prompt { left: 889px; bottom: 49px; width: 417px; height: 43px; padding: 0 30px 0 11px; font-weight: 400; }
  .tip-prompt::before { left: 24px; bottom: -5px; }

  .status { display: flex; align-items: center; height: 45px; padding-left: 2px; background: #fcfcfc; }
  .s1 { width: 61px; }
  .s2 { width: 75px; }
  .s3 { width: 61px; }
  .s4 { width: 149px; }
  .s5, .s6 { width: 165px; }
  .sbtns { display: flex; gap: 5px; }
  .sbtns button { justify-content: center; gap: 9px; width: 37px; height: 37px; border: 1px solid #a5a5a5; border-radius: 4px; background: #fff; }
  .sbtns .wide { width: 54px; }
  .sbtns .on { background: #d5e5fb; border-color: #4a93f0; }
  .sbtns .gap { margin-left: 4px; }

  .taskbar { display: flex; justify-content: space-between; height: 71px; border-top: 2px solid #444850; background: linear-gradient(90deg, #1c2423 34%, #18234a 43%, #1c1c5e 48%, #281468 55%, #2d1255 64%, #301348 71%, #2b1640 87%, #251d35); color: #fff; }
  .apps { display: flex; align-items: center; gap: 6px; padding-left: 19px; }
  .apps button { position: relative; justify-content: center; width: 60px; height: 60px; border-radius: 6px; }
  .run::after, .active::after { content: ""; position: absolute; bottom: 1px; width: 9px; height: 5px; border-radius: 3px; background: #9b9b9b; }
  .apps .active { background: #2a3038; border: 1px solid #3a4047; }
  .apps .active::after { width: 24px; background: #6a6a6a; bottom: 0; }
  .tray { display: flex; align-items: center; gap: 24px; padding-right: 28px; }
  .ime { margin: 0 10px 0 3px; font-size: 20px; }
  .net { gap: 12px; margin-left: 8px; }
  .clock { display: grid; text-align: right; margin: 0 0 2px 1px; }

  .marks { position: absolute; left: 0; top: 0; width: 628px; height: 1300px; pointer-events: none; z-index: 4; }
</style>
